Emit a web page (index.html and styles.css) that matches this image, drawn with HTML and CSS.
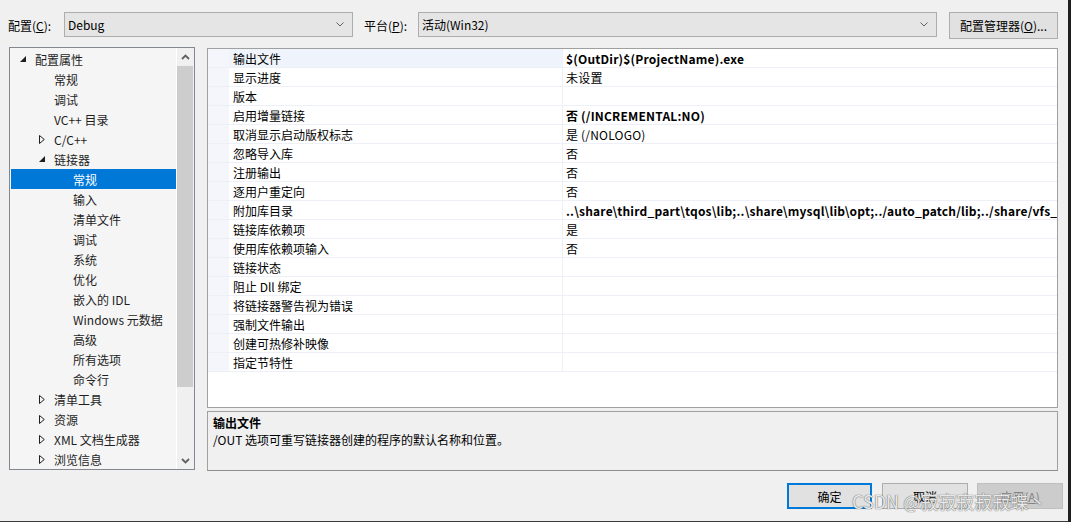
FILE: index.html
```html
<!DOCTYPE html>
<html lang="zh-CN">
<head>
<meta charset="utf-8">
<title>属性页</title>
<link rel="stylesheet" href="styles.css">
</head>
<body>
<div class="dialog">
  <div class="topbar">
    <span class="label label-config">配置(<u>C</u>):</span>
    <div class="combo combo-config"><span class="combo-text">Debug</span><svg class="chev" width="8" height="5" viewBox="0 0 8 5"><polyline points="0.5,0.5 4,4 7.5,0.5" fill="none" stroke="#606060" stroke-width="1"/></svg></div>
    <span class="label label-platform">平台(<u>P</u>):</span>
    <div class="combo combo-platform"><span class="combo-text">活动(Win32)</span><svg class="chev" width="8" height="5" viewBox="0 0 8 5"><polyline points="0.5,0.5 4,4 7.5,0.5" fill="none" stroke="#606060" stroke-width="1"/></svg></div>
    <button class="btn btn-manager">配置管理器(<u>O</u>)...</button>
  </div>

  <div class="main">
    <div class="tree">
      <div class="tree-list">
        <div class="node l0"><span class="tw"><svg width="6" height="6" viewBox="0 0 6 6"><polygon points="6,0 6,6 0,6" fill="#1e1e1e"/></svg></span><span>配置属性</span></div>
        <div class="node l1"><span class="tw"></span><span>常规</span></div>
        <div class="node l1"><span class="tw"></span><span>调试</span></div>
        <div class="node l1"><span class="tw"></span><span>VC++ 目录</span></div>
        <div class="node l1"><span class="tw"><svg width="6" height="9" viewBox="0 0 6 9"><polygon points="0.5,0.5 5.3,4.5 0.5,8.5" fill="none" stroke="#1e1e1e" stroke-width="1"/></svg></span><span>C/C++</span></div>
        <div class="node l1"><span class="tw"><svg width="6" height="6" viewBox="0 0 6 6"><polygon points="6,0 6,6 0,6" fill="#1e1e1e"/></svg></span><span>链接器</span></div>
        <div class="node l2 selected"><span class="tw"></span><span>常规</span></div>
        <div class="node l2"><span class="tw"></span><span>输入</span></div>
        <div class="node l2"><span class="tw"></span><span>清单文件</span></div>
        <div class="node l2"><span class="tw"></span><span>调试</span></div>
        <div class="node l2"><span class="tw"></span><span>系统</span></div>
        <div class="node l2"><span class="tw"></span><span>优化</span></div>
        <div class="node l2"><span class="tw"></span><span>嵌入的 IDL</span></div>
        <div class="node l2"><span class="tw"></span><span>Windows 元数据</span></div>
        <div class="node l2"><span class="tw"></span><span>高级</span></div>
        <div class="node l2"><span class="tw"></span><span>所有选项</span></div>
        <div class="node l2"><span class="tw"></span><span>命令行</span></div>
        <div class="node l1"><span class="tw"><svg width="6" height="9" viewBox="0 0 6 9"><polygon points="0.5,0.5 5.3,4.5 0.5,8.5" fill="none" stroke="#1e1e1e" stroke-width="1"/></svg></span><span>清单工具</span></div>
        <div class="node l1"><span class="tw"><svg width="6" height="9" viewBox="0 0 6 9"><polygon points="0.5,0.5 5.3,4.5 0.5,8.5" fill="none" stroke="#1e1e1e" stroke-width="1"/></svg></span><span>资源</span></div>
        <div class="node l1"><span class="tw"><svg width="6" height="9" viewBox="0 0 6 9"><polygon points="0.5,0.5 5.3,4.5 0.5,8.5" fill="none" stroke="#1e1e1e" stroke-width="1"/></svg></span><span>XML 文档生成器</span></div>
        <div class="node l1"><span class="tw"><svg width="6" height="9" viewBox="0 0 6 9"><polygon points="0.5,0.5 5.3,4.5 0.5,8.5" fill="none" stroke="#1e1e1e" stroke-width="1"/></svg></span><span>浏览信息</span></div>
      </div>
      <div class="vscroll">
        <div class="sb-btn"><svg width="9" height="6" viewBox="0 0 9 6"><polyline points="1,5 4.5,1.5 8,5" fill="none" stroke="#606060" stroke-width="1.8"/></svg></div>
        <div class="sb-thumb"></div>
        <div class="sb-track"></div>
        <div class="sb-btn"><svg width="9" height="6" viewBox="0 0 9 6"><polyline points="1,1 4.5,4.5 8,1" fill="none" stroke="#606060" stroke-width="1.8"/></svg></div>
      </div>
    </div>

    <div class="right">
      <div class="grid">
        <div class="row first"><span class="gutter"></span><span class="name">输出文件</span><span class="value bold">$(OutDir)$(ProjectName).exe</span></div>
        <div class="row"><span class="gutter"></span><span class="name">显示进度</span><span class="value">未设置</span></div>
        <div class="row"><span class="gutter"></span><span class="name">版本</span><span class="value"></span></div>
        <div class="row"><span class="gutter"></span><span class="name">启用增量链接</span><span class="value bold">否 (/INCREMENTAL:NO)</span></div>
        <div class="row"><span class="gutter"></span><span class="name">取消显示启动版权标志</span><span class="value">是 (/NOLOGO)</span></div>
        <div class="row"><span class="gutter"></span><span class="name">忽略导入库</span><span class="value">否</span></div>
        <div class="row"><span class="gutter"></span><span class="name">注册输出</span><span class="value">否</span></div>
        <div class="row"><span class="gutter"></span><span class="name">逐用户重定向</span><span class="value">否</span></div>
        <div class="row"><span class="gutter"></span><span class="name">附加库目录</span><span class="value bold">..\share\third_part\tqos\lib;..\share\mysql\lib\opt;../auto_patch/lib;../share/vfs_core/lib;../share/lib</span></div>
        <div class="row"><span class="gutter"></span><span class="name">链接库依赖项</span><span class="value">是</span></div>
        <div class="row"><span class="gutter"></span><span class="name">使用库依赖项输入</span><span class="value">否</span></div>
        <div class="row"><span class="gutter"></span><span class="name">链接状态</span><span class="value"></span></div>
        <div class="row"><span class="gutter"></span><span class="name">阻止 Dll 绑定</span><span class="value"></span></div>
        <div class="row"><span class="gutter"></span><span class="name">将链接器警告视为错误</span><span class="value"></span></div>
        <div class="row"><span class="gutter"></span><span class="name">强制文件输出</span><span class="value"></span></div>
        <div class="row"><span class="gutter"></span><span class="name">创建可热修补映像</span><span class="value"></span></div>
        <div class="row"><span class="gutter"></span><span class="name">指定节特性</span><span class="value"></span></div>
      </div>
      <div class="desc">
        <div class="desc-title">输出文件</div>
        <div class="desc-text">/OUT 选项可重写链接器创建的程序的默认名称和位置。</div>
      </div>
    </div>
  </div>

  <div class="footer">
    <button class="btn btn-ok">确定</button>
    <button class="btn btn-cancel">取消</button>
    <button class="btn btn-apply" disabled>应用(<u>A</u>)</button>
    <span class="watermark">CSDN @寂寂寂寂寂蝶丶</span>
  </div>
</div>
<div class="edge"></div>
</body>
</html>
```

FILE: styles.css
```css
html, body {
  margin: 0;
  padding: 0;
}
body {
  width: 1071px;
  height: 522px;
  overflow: hidden;
  display: flex;
  background: #f0f0f0;
  font-family: "Noto Sans CJK SC", "Noto Sans", sans-serif;
  font-size: 12px;
  color: #000;
}
.dialog {
  width: 1068px;
  height: 521px;
  border-bottom: 1px solid #3a3a3a;
  display: flex;
  flex-direction: column;
  position: relative;
}
.edge {
  width: 3px;
  height: 522px;
  background: #1f1f1f;
}
u { text-decoration: underline; text-underline-offset: 1px; }

/* top bar */
.topbar {
  display: flex;
  align-items: center;
  height: 27px;
  padding: 12px 0 0 8px;
  margin-bottom: 8px;
}
.label { line-height: 16px; }
.label-config { width: 56px; }
.label-platform { width: 54px; margin-left: 11px; }
.combo {
  box-sizing: border-box;
  height: 25px;
  background: #e5e5e5;
  border: 1px solid #adadad;
  display: flex;
  align-items: center;
  padding: 0 8px 0 3px;
  margin-top: -2px;
}
.combo-text { flex: 1; }
.combo-config { width: 289px; }
.combo-platform { width: 519px; }
.chev { display: block; }
.btn {
  box-sizing: border-box;
  font-family: inherit;
  font-size: 12px;
  color: #000;
  background: #e1e1e1;
  border: 1px solid #adadad;
  padding: 0;
  margin: 0;
}
.btn-manager {
  width: 109px;
  height: 27px;
  margin-left: 12px;
  margin-top: -1px;
}

/* main */
.main {
  display: flex;
  align-items: flex-start;
  padding-left: 9px;
}
.tree {
  box-sizing: border-box;
  width: 186px;
  height: 423px;
  border: 1px solid #828790;
  background: #f5f5f5;
  display: flex;
  overflow: hidden;
}
.tree-list {
  flex: 1;
  padding: 1px 0 0 1px;
  overflow: hidden;
}
.node {
  height: 20px;
  display: flex;
  align-items: center;
  white-space: nowrap;
  color: #1e1e1e;
}
.node .tw {
  width: 15px;
  flex: none;
  display: flex;
  align-items: center;
}
.node .tw svg { display: block; }
.l0 { padding-left: 9px; }
.l1 { padding-left: 28px; }
.l2 { padding-left: 47px; }
.node.selected {
  background: #0078d7;
  color: #fff;
}
.vscroll {
  width: 17px;
  border-left: 1px solid #fff;
  background: #f0f0f0;
  display: flex;
  flex-direction: column;
}
.sb-btn {
  height: 17px;
  flex: none;
  display: flex;
  align-items: center;
  justify-content: center;
}
.sb-thumb {
  height: 321px;
  margin: 1px 1px 0 0;
  background: #cdcdcd;
  flex: none;
}
.sb-track { flex: 1; }

.right {
  margin-left: 12px;
  margin-top: 1px;
  width: 851px;
  display: flex;
  flex-direction: column;
  gap: 3px;
}
.grid {
  box-sizing: border-box;
  height: 360px;
  border: 1px solid #a0a0a0;
  background: #fff;
  overflow: hidden;
}
.row {
  box-sizing: border-box;
  height: 19px;
  display: flex;
  border-bottom: 1px solid #eef0f7;
  white-space: nowrap;
  overflow: hidden;
}
.gutter {
  width: 21px;
  flex: none;
  background: #f4f6fb;
}
.name {
  box-sizing: border-box;
  width: 334px;
  flex: none;
  padding: 1px 0 0 4px;
  border-right: 1px solid #eef0f7;
  line-height: 17px;
}
.row.first .name { background: #eff4fc; }
.value {
  flex: 1;
  min-width: 0;
  overflow: hidden;
  padding: 1px 0 0 3px;
  line-height: 17px;
  letter-spacing: 0.2px;
}
.bold { font-weight: bold; }

.desc {
  box-sizing: border-box;
  height: 60px;
  border: 1px solid #a0a0a0;
  border-bottom-color: #8c8c8c;
  background: #f0f0f0;
  padding: 2px 5px;
}
.desc-title { font-weight: bold; line-height: 17px; }
.desc-text { line-height: 17px; }

/* footer */
.footer {
  display: flex;
  padding-left: 787px;
  margin-top: 12px;
  gap: 10px;
}
.btn-ok, .btn-cancel, .btn-apply {
  width: 86px;
  height: 26px;
}
.btn-ok { border: 2px solid #0078d7; width: 85px; }
.btn-apply {
  margin-left: -1px;
  background: #cccccc;
  border-color: #bfbfbf;
  color: #838383;
}
.watermark {
  position: absolute;
  left: 852px;
  top: 490px;
  font-size: 18px;
  line-height: 22px;
  color: rgba(255, 255, 255, 0.85);
  text-shadow: 0 0 1px #6d6d6d, 0 0 1px #6d6d6d;
  white-space: nowrap;
  font-family: "Noto Sans CJK SC", sans-serif;
}
```
